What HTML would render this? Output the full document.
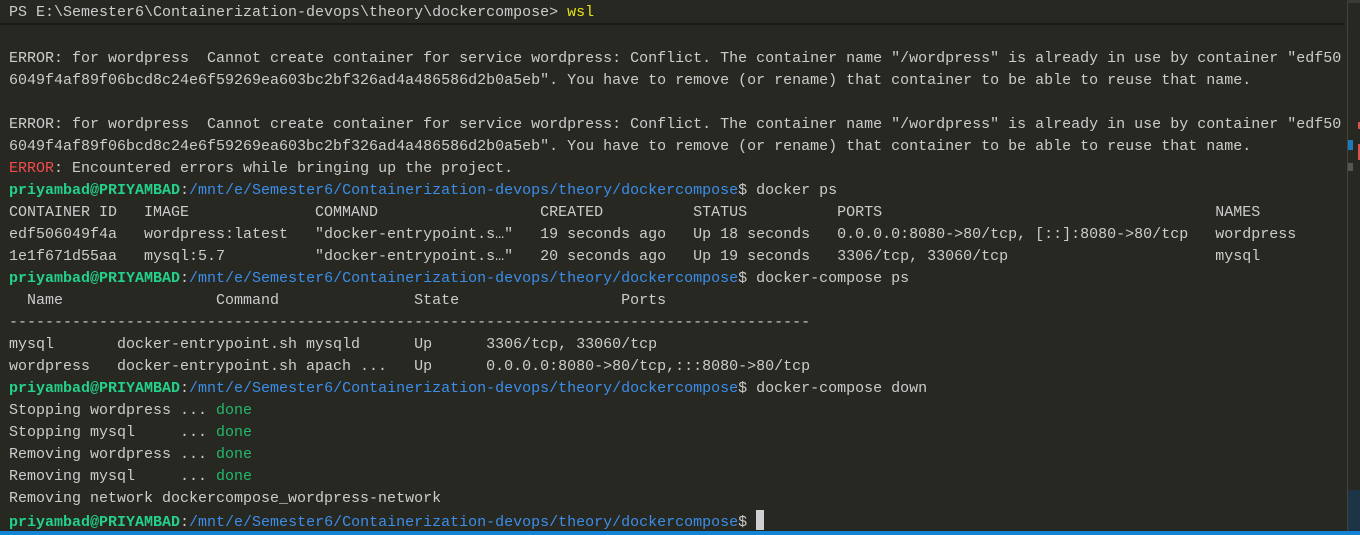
<!DOCTYPE html>
<html><head><meta charset="utf-8"><style>
html,body{margin:0;padding:0;width:1360px;height:535px;overflow:hidden;background:#272822;}
body{position:relative;font-family:"Liberation Mono",monospace;font-size:15px;color:#cccccc;}
.l{position:absolute;left:9px;white-space:pre;line-height:22px;height:22px;margin-top:1px;}
.g{color:#23d18b;font-weight:bold}
.b{color:#3b8eea}
.r{color:#f14c4c}
.gd{color:#23b86b}
.y{color:#e5e510}
</style></head><body>
<div class="l" style="top:1px">PS E:\Semester6\Containerization-devops\theory\dockercompose&gt; <span class="y">wsl</span></div>
<div style="position:absolute;left:0;top:23px;width:1345px;height:2px;background:#1a1a17"></div>
<div style="position:absolute;left:1347px;top:0;width:1px;height:531px;background:#44443e"></div>
<div style="position:absolute;left:1347px;top:0;width:13px;height:3px;background:#3a3a36"></div>
<div style="position:absolute;left:1358px;top:122px;width:2px;height:7px;background:#d9534f"></div>
<div style="position:absolute;left:1358px;top:144px;width:2px;height:16px;background:#d9534f"></div>
<div style="position:absolute;left:1348px;top:140px;width:5px;height:10px;background:#1c7ab8"></div>
<div style="position:absolute;left:1348px;top:163px;width:5px;height:8px;background:#555"></div>
<div style="position:absolute;left:1348px;top:490px;width:12px;height:41px;background:#1d3447"></div>
<div style="position:absolute;left:0;top:531px;width:1360px;height:4px;background:#1383d6"></div>
<div class="l" style="top:47px">ERROR: for wordpress  Cannot create container for service wordpress: Conflict. The container name "/wordpress" is already in use by container "edf50</div>
<div class="l" style="top:69px">6049f4af89f06bcd8c24e6f59269ea603bc2bf326ad4a486586d2b0a5eb". You have to remove (or rename) that container to be able to reuse that name.</div>
<div class="l" style="top:113px">ERROR: for wordpress  Cannot create container for service wordpress: Conflict. The container name "/wordpress" is already in use by container "edf50</div>
<div class="l" style="top:135px">6049f4af89f06bcd8c24e6f59269ea603bc2bf326ad4a486586d2b0a5eb". You have to remove (or rename) that container to be able to reuse that name.</div>
<div class="l" style="top:157px"><span class="r">ERROR</span>: Encountered errors while bringing up the project.</div>
<div class="l" style="top:179px"><span class="g">priyambad@PRIYAMBAD</span>:<span class="b">/mnt/e/Semester6/Containerization-devops/theory/dockercompose</span>$ docker ps</div>
<div class="l" style="top:201px">CONTAINER ID   IMAGE              COMMAND                  CREATED          STATUS          PORTS                                     NAMES</div>
<div class="l" style="top:223px">edf506049f4a   wordpress:latest   "docker-entrypoint.s…"   19 seconds ago   Up 18 seconds   0.0.0.0:8080-&gt;80/tcp, [::]:8080-&gt;80/tcp   wordpress</div>
<div class="l" style="top:245px">1e1f671d55aa   mysql:5.7          "docker-entrypoint.s…"   20 seconds ago   Up 19 seconds   3306/tcp, 33060/tcp                       mysql</div>
<div class="l" style="top:267px"><span class="g">priyambad@PRIYAMBAD</span>:<span class="b">/mnt/e/Semester6/Containerization-devops/theory/dockercompose</span>$ docker-compose ps</div>
<div class="l" style="top:289px">  Name                 Command               State                  Ports</div>
<div class="l" style="top:311px">-----------------------------------------------------------------------------------------</div>
<div class="l" style="top:333px">mysql       docker-entrypoint.sh mysqld      Up      3306/tcp, 33060/tcp</div>
<div class="l" style="top:355px">wordpress   docker-entrypoint.sh apach ...   Up      0.0.0.0:8080-&gt;80/tcp,:::8080-&gt;80/tcp</div>
<div class="l" style="top:377px"><span class="g">priyambad@PRIYAMBAD</span>:<span class="b">/mnt/e/Semester6/Containerization-devops/theory/dockercompose</span>$ docker-compose down</div>
<div class="l" style="top:399px">Stopping wordpress ... <span class="gd">done</span></div>
<div class="l" style="top:421px">Stopping mysql     ... <span class="gd">done</span></div>
<div class="l" style="top:443px">Removing wordpress ... <span class="gd">done</span></div>
<div class="l" style="top:465px">Removing mysql     ... <span class="gd">done</span></div>
<div class="l" style="top:487px">Removing network dockercompose_wordpress-network</div>
<div class="l" style="top:509px"><span class="g">priyambad@PRIYAMBAD</span>:<span class="b">/mnt/e/Semester6/Containerization-devops/theory/dockercompose</span>$ <span style="display:inline-block;width:8px;height:20px;background:#d0d0d0;vertical-align:-4px"></span></div>
</body></html>
